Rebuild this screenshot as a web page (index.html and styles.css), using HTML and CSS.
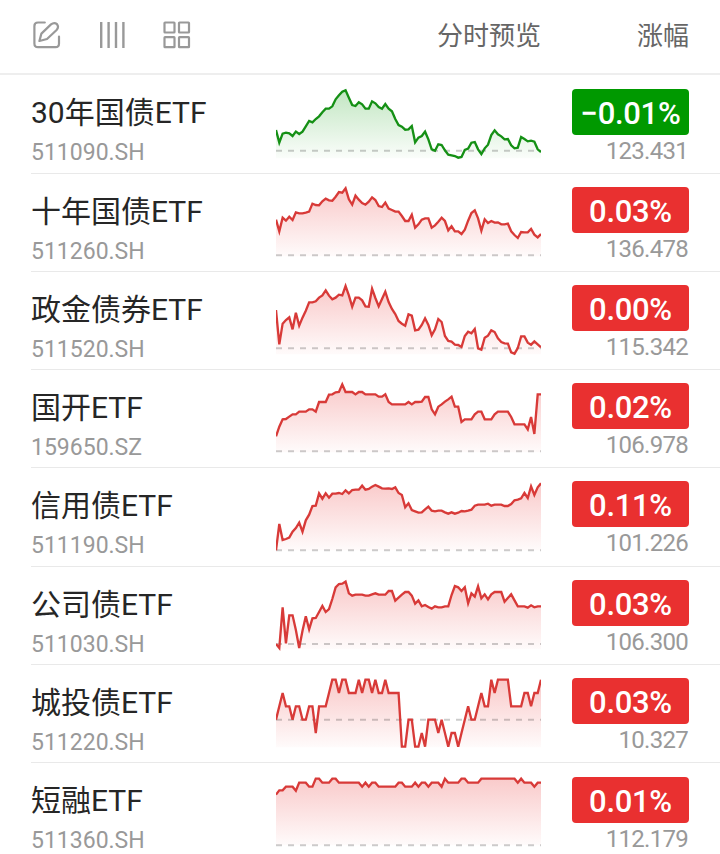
FILE: index.html
```html
<!DOCTYPE html>
<html lang="zh-CN">
<head>
<meta charset="UTF-8">
<meta name="viewport" content="width=device-width, initial-scale=1.0">
<title>债券ETF</title>
<link rel="stylesheet" href="styles.css">
</head>
<body>
  <header class="toolbar">
    <div class="tools">
      <svg class="icon icon-edit" viewBox="0 0 28 28" fill="none">
        <path d="M11.8 1.5H5Q1.4 1.5 1.4 5V22.5Q1.4 26.2 5 26.2H22.5Q26 26.2 26 22.5V15.6"/>
        <path d="M6.4 20L8.4 12.6L18 3.4Q21.2 0.8 24 3.2Q26.2 6 23.6 9L14 18Z"/>
      </svg>
      <svg class="icon icon-bars" viewBox="0 0 28 28" fill="none">
        <path d="M3.2 1V27M10.6 1V27M18 1V27M25.4 1V27"/>
      </svg>
      <svg class="icon icon-grid" viewBox="0 0 28 28" fill="none">
        <rect x="1.5" y="1.5" width="10" height="10" rx="0.5"/>
        <rect x="16" y="1.5" width="10" height="10" rx="0.5"/>
        <rect x="1.5" y="16.2" width="10" height="10" rx="0.5"/>
        <rect x="16" y="16.2" width="10" height="10" rx="0.5"/>
      </svg>
    </div>
    <div class="col-chart">分时预览</div>
    <div class="col-change">涨幅</div>
  </header>
  <main class="list">
    <div class="row down">
      <div class="info"><div class="name">30年国债ETF</div><div class="code">511090.SH</div></div>
      <svg class="chart" viewBox="0 0 795 270"></svg>
      <div class="quote"><div class="badge">−0.01%</div><div class="price">123.431</div></div>
    </div>
    <div class="row">
      <div class="info"><div class="name">十年国债ETF</div><div class="code">511260.SH</div></div>
      <svg class="chart" viewBox="0 0 795 270"></svg>
      <div class="quote"><div class="badge">0.03%</div><div class="price">136.478</div></div>
    </div>
    <div class="row">
      <div class="info"><div class="name">政金债券ETF</div><div class="code">511520.SH</div></div>
      <svg class="chart" viewBox="0 0 795 270"></svg>
      <div class="quote"><div class="badge">0.00%</div><div class="price">115.342</div></div>
    </div>
    <div class="row">
      <div class="info"><div class="name">国开ETF</div><div class="code">159650.SZ</div></div>
      <svg class="chart" viewBox="0 0 795 270"></svg>
      <div class="quote"><div class="badge">0.02%</div><div class="price">106.978</div></div>
    </div>
    <div class="row">
      <div class="info"><div class="name">信用债ETF</div><div class="code">511190.SH</div></div>
      <svg class="chart" viewBox="0 0 795 270"></svg>
      <div class="quote"><div class="badge">0.11%</div><div class="price">101.226</div></div>
    </div>
    <div class="row">
      <div class="info"><div class="name">公司债ETF</div><div class="code">511030.SH</div></div>
      <svg class="chart" viewBox="0 0 795 270"></svg>
      <div class="quote"><div class="badge">0.03%</div><div class="price">106.300</div></div>
    </div>
    <div class="row">
      <div class="info"><div class="name">城投债ETF</div><div class="code">511220.SH</div></div>
      <svg class="chart" viewBox="0 0 795 270"></svg>
      <div class="quote"><div class="badge">0.03%</div><div class="price">10.327</div></div>
    </div>
    <div class="row">
      <div class="info"><div class="name">短融ETF</div><div class="code">511360.SH</div></div>
      <svg class="chart" viewBox="0 0 795 270"></svg>
      <div class="quote"><div class="badge">0.01%</div><div class="price">112.179</div></div>
    </div>
  </main>
  <script src="charts.js"></script>
</body>
</html>
```
FILE: styles.css
```css
html, body {
  margin: 0;
  padding: 0;
  background: #fff;
}
body {
  height: 854px;
  overflow: hidden;
  font-family: Roboto, "Noto Sans CJK SC", sans-serif;
  color: #262626;
}
.toolbar {
  display: flex;
  align-items: center;
  box-sizing: border-box;
  height: 75px;
  padding: 0 31px 4px 33px;
  border-bottom: 2px solid #eee;
  font-size: 26px;
  line-height: 36px;
  color: #666;
}
.tools {
  display: flex;
  gap: 37px;
  flex: 1;
}
.icon {
  display: block;
  width: 28px;
  height: 28px;
  stroke: #999;
  stroke-width: 2.2;
  stroke-linecap: round;
  stroke-linejoin: round;
}
.icon-bars {
  stroke-width: 2.4;
  stroke-linecap: butt;
}
.col-chart {
  width: 104px;
  padding-top: 2px;
}
.col-change {
  width: 148px;
  padding-top: 2px;
  text-align: right;
}
.list {
  padding-left: 31px;
}
.row {
  display: grid;
  grid-template-columns: 245px 265px 1fr;
  box-sizing: border-box;
  height: 98.17px;
  padding-right: 31px;
  border-bottom: 1.5px solid #e9e9e9;
}
.list .row:first-child {
  height: 99px;
}
.info {
  padding-top: 19px;
}
.name {
  font-size: 30px;
  line-height: 38px;
  white-space: nowrap;
}
.code {
  margin-top: 7px;
  font-size: 23px;
  line-height: 28px;
  color: #999;
}
.chart {
  display: block;
  width: 265px;
  height: 90px;
  margin-top: 4px;
}
.row:first-child .chart {
  margin-top: 5px;
}
.line {
  fill: none;
  stroke: #d83a38;
  stroke-width: 7;
  stroke-linejoin: miter;
}
.down .line {
  stroke: #159015;
}
.base {
  stroke: #000;
  stroke-opacity: 0.2;
  stroke-width: 6;
  stroke-dasharray: 18 18;
}
.quote {
  display: flex;
  flex-direction: column;
  align-items: flex-end;
  padding-top: 13px;
}
.row:first-child .quote,
.row:last-child .quote {
  padding-top: 14px;
}
.badge {
  width: 117px;
  height: 46px;
  border-radius: 4px;
  background: #e93030;
  color: #fff;
  font-size: 31px;
  font-weight: 500;
  line-height: 50px;
  letter-spacing: -0.3px;
  text-align: center;
}
.down .badge {
  background: #090;
}
.price {
  margin-top: 2px;
  padding-right: 1px;
  font-size: 24px;
  line-height: 28px;
  letter-spacing: -0.7px;
  color: #999;
}
```
FILE: charts.js
```js
// base: y of the previous close, points: one y per time step
const series = [
  { base: 212, points: [150,188,161,158,160,168,155,162,155,139,123,127,117,109,97,86,86,79,58,46,35,31,53,75,78,67,73,86,86,64,70,81,86,72,86,94,117,135,140,149,148,138,187,173,168,155,178,208,212,193,195,211,224,226,228,233,231,210,206,188,186,208,222,205,194,165,151,163,169,178,177,196,205,203,171,177,184,182,185,208,216] },
  { base: 232, points: [125,160,119,128,116,126,103,106,106,104,101,77,81,82,70,62,67,68,56,42,44,31,64,80,53,65,75,80,71,58,66,84,87,74,92,96,101,101,114,129,129,110,149,139,125,121,121,149,142,131,119,129,157,145,160,160,168,155,128,105,97,121,158,124,135,129,134,133,139,139,137,160,171,180,162,163,163,153,170,178,168] },
  { base: 217, points: [102,205,143,132,124,160,110,149,125,104,79,79,76,65,58,43,59,70,65,56,58,30,58,92,65,65,73,91,92,38,66,91,69,47,78,99,114,135,143,149,115,119,163,161,147,127,147,178,160,129,138,180,195,197,206,207,213,180,167,172,159,217,221,185,179,163,168,187,198,202,203,229,233,216,181,181,200,206,196,205,214] },
  { base: 232, points: [187,158,136,135,128,121,121,113,113,113,106,106,113,84,84,84,62,61,55,54,31,54,54,54,61,54,54,61,61,61,61,68,68,61,84,91,91,91,91,91,84,91,84,84,83,69,69,106,121,98,91,83,76,68,98,98,144,136,136,136,121,113,113,136,136,136,121,113,113,113,113,129,151,151,151,151,166,129,180,61,61] },
  { base: 235, points: [235,156,204,201,197,179,168,152,179,145,128,102,101,64,80,64,77,65,65,63,66,55,64,54,53,53,41,53,51,44,39,44,49,50,49,51,46,63,69,106,94,114,118,122,121,112,104,116,118,116,116,121,125,121,125,122,117,118,116,113,101,98,98,98,95,101,98,98,98,102,102,96,85,83,79,63,78,43,69,46,34] },
  { base: 219, points: [219,231,109,217,133,133,177,231,179,136,175,142,141,123,105,123,114,84,49,39,38,32,67,74,71,71,71,74,74,70,67,71,71,71,60,60,89,80,71,63,63,74,98,88,106,102,108,113,106,109,109,106,106,72,45,49,60,49,97,67,77,46,82,70,85,70,63,63,63,92,81,70,88,106,106,106,110,103,109,106,106] },
  { base: 152, points: [152,112,72,112,112,152,112,112,152,152,112,112,192,112,112,112,72,32,32,72,32,32,72,72,72,32,72,32,32,72,32,72,72,32,72,72,72,72,233,233,152,152,233,233,192,233,152,152,152,192,152,192,233,192,192,233,192,152,112,152,152,112,72,112,112,32,72,32,32,32,32,112,112,112,112,72,72,112,72,72,32] },
  { base: 235, points: [83,70,70,59,59,59,71,47,47,47,59,59,35,35,47,47,47,35,35,47,47,47,47,47,47,47,59,47,59,47,47,59,59,59,59,59,59,47,47,59,59,59,47,59,47,47,59,47,47,47,59,35,47,47,47,47,35,35,47,47,47,47,35,35,35,35,35,35,35,35,35,35,35,47,35,47,47,47,59,47,47] }
];

document.querySelectorAll('.chart').forEach((svg, i) => {
  const { base, points } = series[i];
  const color = svg.parentNode.classList.contains('down') ? '#15a015' : '#e93030';
  const step = 795 / (points.length - 1);
  const line = points.map((y, n) => (n * step).toFixed(1) + ',' + y).join(' ');
  svg.innerHTML = `
    <linearGradient id="fill${i}" gradientUnits="userSpaceOnUse" x1="0" y1="30" x2="0" y2="235">
      <stop offset="0" stop-color="${color}" stop-opacity="0.26"/>
      <stop offset="1" stop-color="${color}" stop-opacity="0.02"/>
    </linearGradient>
    <polygon points="0,235 ${line} 795,235" fill="url(#fill${i})"/>
    <line class="base" x1="0" y1="${base}" x2="795" y2="${base}"/>
    <polyline class="line" points="${line}"/>`;
});
```
